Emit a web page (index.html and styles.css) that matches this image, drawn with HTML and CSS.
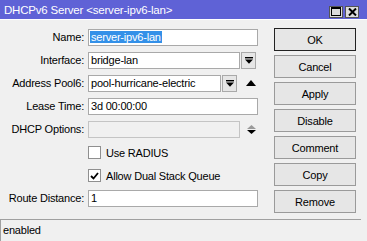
FILE: index.html
```html
<!DOCTYPE html>
<html lang="en">
<head>
  <meta charset="UTF-8" />
  <title>DHCPv6 Server</title>
  <link rel="stylesheet" href="styles.css">
</head>
<body>
  <div class="window">
    <div class="titlebar">
      <span class="title">DHCPv6 Server &lt;server-ipv6-lan&gt;</span>
      <div class="title-buttons">
        <span class="tbtn"><svg width="10" height="9" viewBox="0 0 10 9"><rect x="0.5" y="0.5" width="9" height="8" fill="none" stroke="#000" stroke-width="1"/><line x1="0" y1="1.5" x2="10" y2="1.5" stroke="#000"/></svg></span>
        <span class="tbtn"><svg width="9" height="8" viewBox="0 0 9 8"><path d="M1 0.5 L8 7.5 M8 0.5 L1 7.5" stroke="#000" stroke-width="2"/></svg></span>
      </div>
    </div>

    <div class="content">
      <div class="form">
        <!-- Name -->
        <label>Name:</label>
        <div class="field">
          <div class="input"><span class="selected">server-ipv6-lan</span></div>
        </div>

        <!-- Interface -->
        <label>Interface:</label>
        <div class="field">
          <div class="input mid">bridge-lan</div>
          <span class="drop"><svg width="8" height="7" viewBox="0 0 8 7"><rect x="0" y="0" width="8" height="1.4" fill="#000"/><path d="M0 2.4 H8 L4 6.8 Z" fill="#000"/></svg></span>
        </div>

        <!-- Address pool -->
        <label>Address Pool6:</label>
        <div class="field">
          <div class="input short">pool-hurricane-electric</div>
          <span class="drop"><svg width="8" height="7" viewBox="0 0 8 7"><rect x="0" y="0" width="8" height="1.4" fill="#000"/><path d="M0 2.4 H8 L4 6.8 Z" fill="#000"/></svg></span>
          <span class="arrow"><svg width="10" height="6" viewBox="0 0 10 6"><path d="M0 6 L5 0 L10 6 Z" fill="#000"/></svg></span>
        </div>

        <!-- Lease time -->
        <label>Lease Time:</label>
        <div class="field">
          <div class="input">3d 00:00:00</div>
        </div>

        <!-- DHCP options -->
        <label>DHCP Options:</label>
        <div class="field">
          <div class="input mid disabled"></div>
          <span class="updown"><svg width="9" height="9" viewBox="0 0 9 9"><path d="M0 4 L4.5 0 L9 4 Z" fill="#9a9a9a"/><path d="M0 5 L9 5 L4.5 9 Z" fill="#000"/></svg></span>
        </div>

        <!-- Checkboxes -->
        <span></span>
        <div class="field">
          <span class="check"></span>
          <span class="check-label">Use RADIUS</span>
        </div>

        <span></span>
        <div class="field">
          <span class="check"><svg width="9" height="8" viewBox="0 0 9 8"><path d="M1 4 L3.5 6.5 L8 1" fill="none" stroke="#000" stroke-width="1.8"/></svg></span>
          <span class="check-label">Allow Dual Stack Queue</span>
        </div>

        <!-- Route distance -->
        <label>Route Distance:</label>
        <div class="field">
          <div class="input">1</div>
        </div>
      </div>

      <div class="actions">
        <button class="btn default">OK</button>
        <button class="btn">Cancel</button>
        <button class="btn">Apply</button>
        <button class="btn">Disable</button>
        <button class="btn">Comment</button>
        <button class="btn">Copy</button>
        <button class="btn">Remove</button>
      </div>
    </div>

    <div class="status">enabled</div>
  </div>
</body>
</html>
```

FILE: styles.css
```css
:root {
  --title: #5f62d6;
  --bg: #f0f0f0;
  --border: #a9a9a9;
  --btn-bg: #e6e6e6;
}

* {
  box-sizing: border-box;
}

body {
  margin: 0;
  background: var(--bg);
  font-family: "Liberation Sans", Arial, sans-serif;
  font-size: 11px;
  letter-spacing: -0.2px;
  color: #000;
}

.window {
  width: 367px;
  height: 241px;
  overflow: hidden;
}

.titlebar {
  height: 20px;
  background: var(--title);
  border-bottom: 1px solid #fff;
  display: flex;
  align-items: center;
  justify-content: space-between;
  padding: 0 8px 0 4px;
}

.title {
  color: #fff;
  font-size: 11.5px;
}

.title-buttons {
  display: flex;
  gap: 2px;
  margin-top: 4px;
}

.tbtn {
  width: 14px;
  height: 12px;
  background: #dcdcdc;
  border: 1px solid #555;
  display: flex;
  align-items: center;
  justify-content: center;
}

.content {
  height: 199px;
  display: flex;
  padding-top: 8px;
}

.form {
  width: 274px;
  padding-top: 1px;
  display: grid;
  grid-template-columns: 84px 1fr;
  grid-auto-rows: 17px;
  column-gap: 4px;
  row-gap: 6px;
  align-content: start;
}

.form label {
  text-align: right;
  line-height: 17px;
  white-space: nowrap;
}

.field {
  display: flex;
  align-items: center;
  height: 17px;
}

.input {
  width: 170px;
  height: 17px;
  border: 1px solid var(--border);
  background: #fff;
  padding: 0 2px;
  line-height: 15px;
  white-space: nowrap;
  overflow: hidden;
}

.input.mid {
  width: 152px;
}

.input.short {
  width: 133px;
}

.input.disabled {
  background: var(--bg);
  border-color: #c4c4c4;
}

.selected {
  background: #3390e8;
  color: #fff;
  padding: 0 1px;
  margin-left: -1px;
}

.drop {
  width: 15px;
  height: 17px;
  margin-left: 1px;
  border: 1px solid var(--border);
  background: var(--btn-bg);
  display: flex;
  align-items: center;
  justify-content: center;
}

.arrow {
  margin-left: 9px;
  display: flex;
  margin-top: -1px;
}

.updown {
  margin-left: 7px;
  display: flex;
}

.check {
  width: 13px;
  height: 13px;
  border: 1px solid #8f8f8f;
  background: #fff;
  display: flex;
  align-items: center;
  justify-content: center;
}

.check-label {
  margin-left: 5px;
}

.actions {
  width: 82px;
  display: flex;
  flex-direction: column;
  gap: 4px;
}

.btn {
  height: 23px;
  padding: 0;
  background: var(--btn-bg);
  border: 1px solid #9a9a9a;
  font-family: inherit;
  font-size: 11px;
  letter-spacing: -0.2px;
  color: #000;
}

.btn.default {
  border-color: #222;
}

.status {
  width: 361px;
  height: 22px;
  border-top: 1px solid #a0a0a0;
  border-left: 1px solid #a0a0a0;
  padding-left: 2px;
  line-height: 20px;
}
```
